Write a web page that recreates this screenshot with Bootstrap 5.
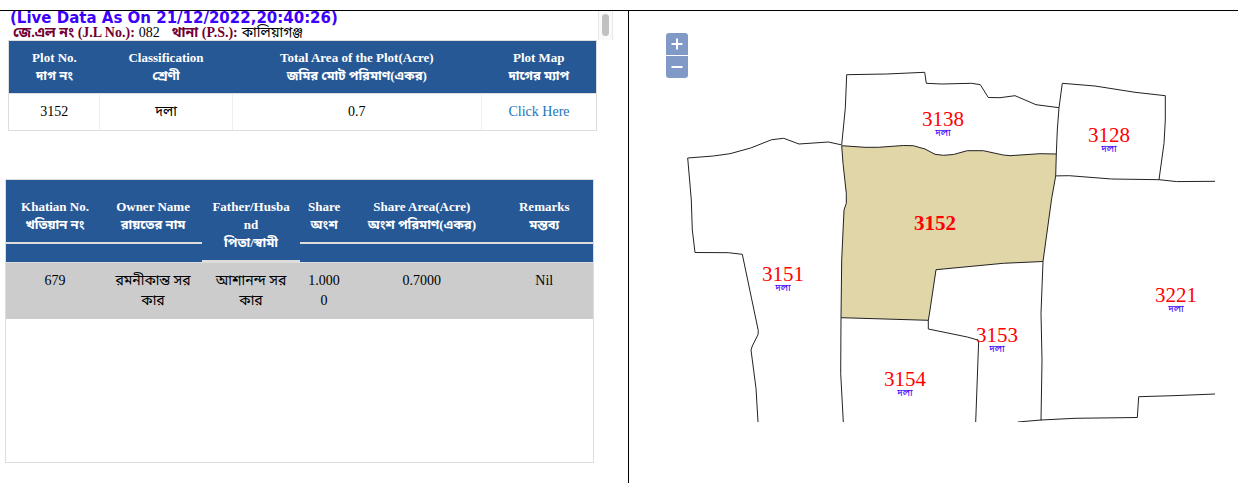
<!DOCTYPE html>
<html lang="bn">
<head>
<meta charset="utf-8">
<meta name="viewport" content="width=device-width, initial-scale=1">
<title>Plot Information</title>
<link href="https://cdn.jsdelivr.net/npm/bootstrap@5.3.0/dist/css/bootstrap.min.css" rel="stylesheet">
<style>
  body { font-family: "Liberation Serif", "Noto Sans Bengali", "Noto Sans", serif; font-size: 14px; line-height: 20px; color: #000; background: #fff; padding-top: 10px; }
  .split { display: grid; grid-template-columns: 629fr 609fr; border-top: 1px solid #000; }
  .info-pane { border-right: 1px solid #000; padding: 0 15px 20px 5px; }
  .live-time { font: bold 15px/14px "DejaVu Sans", sans-serif; color: #3c00ff; padding-left: 5px; white-space: nowrap; }
  .place { line-height: 15px; padding-left: 8px; white-space: nowrap; }
  .place dt { color: #700033; }
  .scroll-track { width: 15px; background: #fafafa; border: solid #e8e8e8; border-width: 0 1px; padding: 3px 3px 4px; }
  .scroll-thumb { width: 8px; background: #c1c1c1; }
  .tables { padding-right: 19px; }
  .grid-table { table-layout: fixed; width: 100%; text-align: center; }
  .grid-table th { color: #fff; font-size: 13px; line-height: 18px; background: #265896; vertical-align: top; }
  .plot-wrap { margin: 0 -3px 0 3px; border: 1px solid #ddd; }
  .plot-table th { padding: 8px 4px; }
  .plot-table td { padding: 8px 4px; border-top: 1px solid #ddd; border-left: 1px solid #eee; }
  .plot-table td:first-child { border-left: 0; }
  .plot-table a { color: #1b75bb; text-decoration: none; }
  .owner-wrap { min-height: 284px; margin-top: 48px; border: 1px solid #ddd; }
  .owner-table td { background: #ccc; padding: 8px; border-top: 1px solid #ddd; vertical-align: top; }
  .owner-table th { padding: 0; }
  .head-cell { padding: 18px 8px 8px; border-bottom: 2px solid #ddd; word-break: break-all; }
  .map-pane { padding-right: 23px; }
  .map-pane svg { display: block; width: 100%; height: auto; }
  .lines { fill: none; stroke: #222; stroke-width: 1; }
  .plot-no { font-size: 21px; fill: #f00; text-anchor: middle; }
  .plot-kind { font-size: 10px; fill: #3c00ff; text-anchor: middle; }
  .zoom-box { top: 22px; left: 37px; gap: 1px; }
  .zoom-box button { width: 22px; height: 22px; border: 0; padding: 0; background: #8099c7; }
  .zoom-box button:first-child { border-radius: 3px 3px 0 0; }
  .zoom-box button:last-child { border-radius: 0 0 3px 3px; }
  .zoom-box svg { width: 22px; height: 22px; }
</style>
</head>
<body>
<main class="split">
  <section class="info-pane">
    <div class="d-flex justify-content-between">
      <div>
        <div class="live-time">(Live Data As On 21/12/2022,20:40:26)</div>
        <dl class="place d-flex gap-1 mb-0">
          <dt>জে.এল নং (J.L No.):</dt><dd class="mb-0 me-2">082</dd>
          <dt>থানা (P.S.):</dt><dd class="mb-0">কালিয়াগঞ্জ</dd>
        </dl>
      </div>
      <div class="scroll-track d-flex"><div class="scroll-thumb rounded-pill"></div></div>
    </div>
    <div class="tables">
      <div class="plot-wrap">
        <table class="grid-table plot-table">
          <colgroup><col style="width:15.5%"><col style="width:22.5%"><col style="width:42.5%"><col style="width:19.5%"></colgroup>
          <thead><tr>
            <th>Plot No.<br>দাগ নং</th>
            <th>Classification<br>শ্রেণী</th>
            <th>Total Area of the Plot(Acre)<br>জমির মোট পরিমাণ(একর)</th>
            <th>Plot Map<br>দাগের ম্যাপ</th>
          </tr></thead>
          <tbody><tr><td>3152</td><td>দলা</td><td>0.7</td><td><a href="#map">Click Here</a></td></tr></tbody>
        </table>
      </div>
      <div class="owner-wrap">
        <table class="grid-table owner-table">
          <colgroup><col style="width:16.7%"><col style="width:16.7%"><col style="width:16.7%"><col style="width:8.2%"><col style="width:25.1%"><col style="width:16.6%"></colgroup>
          <thead><tr>
            <th><div class="head-cell">Khatian No.<br>খতিয়ান নং</div></th>
            <th><div class="head-cell">Owner Name<br>রায়তের নাম</div></th>
            <th><div class="head-cell">Father/Husba<wbr>nd<br>পিতা/স্বামী</div></th>
            <th><div class="head-cell px-0">Share<br>অংশ</div></th>
            <th><div class="head-cell">Share Area(Acre)<br>অংশ পরিমাণ(একর)</div></th>
            <th><div class="head-cell">Remarks<br>মন্তব্য</div></th>
          </tr></thead>
          <tbody><tr>
            <td>679</td>
            <td class="px-0">রমনীকান্ত সর<br>কার</td>
            <td class="px-0">আশানন্দ সর<br>কার</td>
            <td class="px-0">1.000<br>0</td>
            <td>0.7000</td>
            <td>Nil</td>
          </tr></tbody>
        </table>
      </div>
    </div>
  </section>
  <section class="map-pane position-relative" id="map">
    <svg viewBox="629 11 586 411" role="img" aria-label="Plot map">
      <path fill="#e0d6a8" stroke="#222" d="M841.7 145.7L865 147.3H878.3L903.3 145.5L913.3 145.7L925 149L935 154.3L943.3 155.3L953.3 154.5L967.3 150.7H983.3L1003.3 155L1010 155.7L1040 153.7L1056.3 154L1055.7 176L1051.7 198.3L1043 261.5L1003.3 263.3L936 269.7L930 310L928.3 320.3L841 317.7L841.7 260L844 210L846.3 203.3V193.3L843 163.3Z"/>
      <g class="lines">
        <path d="M841.7 144.7L845.3 108.3L846.7 74.7L886.7 74L924.7 72.3L926.3 83.3L941.7 84L971.7 83.3L980.3 84.7L988.3 97.5L1000 97.7L1015 95.7L1036 104.7L1059 107.7"/>
        <path d="M1056.3 154L1057.3 130L1059 107.7L1062.3 83.3L1095 86L1135 92.3L1165.3 95.7V120L1164 143.3L1159 179.7"/>
        <path d="M1055.7 175.9L1069.3 175.7L1111.7 179L1159 179.7L1176.7 181.6L1215 181.3"/>
        <path d="M841.7 144.9L828.3 142L799 144L783.7 138.3L771.7 139.7L750.7 148L730 153.7L713.3 156L687.7 158L691.3 200L692.3 230L695 252.5L728.3 252.7L742.3 254.3L758.3 330.7L758 334.7L752.3 346L751 350L756 388.3L758 422"/>
        <path d="M841 317.7L840.7 373.3L843.3 422"/>
        <path d="M928.3 320.3V329L967.3 337L978.7 340.3L975.7 422"/>
        <path d="M1043 261.5L1041 313.3L1042 360L1041 420.3"/>
        <path d="M1017.7 422L1041 420L1075 418.3L1137.3 417.5L1138.7 396.7L1173 395.7L1215 394"/>
      </g>
      <text class="plot-no" x="943" y="126">3138</text><text class="plot-kind" x="943" y="136">দলা</text>
      <text class="plot-no" x="1109" y="142">3128</text><text class="plot-kind" x="1109" y="152">দলা</text>
      <text class="plot-no" x="783" y="281">3151</text><text class="plot-kind" x="783" y="291">দলা</text>
      <text class="plot-no fw-bold" x="935" y="230">3152</text>
      <text class="plot-no" x="997" y="342">3153</text><text class="plot-kind" x="997" y="352">দলা</text>
      <text class="plot-no" x="905" y="386">3154</text><text class="plot-kind" x="905" y="396">দলা</text>
      <text class="plot-no" x="1176" y="302">3221</text><text class="plot-kind" x="1176" y="312">দলা</text>
    </svg>
    <div class="zoom-box position-absolute d-flex flex-column">
      <button type="button" aria-label="Zoom in" class="d-block"><svg viewBox="0 0 22 22"><path d="M11 5.500V16.500M5.500 11H16.500" stroke="#fff" stroke-width="2"/></svg></button>
      <button type="button" aria-label="Zoom out" class="d-block"><svg viewBox="0 0 22 22"><path d="M5.500 11H16.500" stroke="#fff" stroke-width="2"/></svg></button>
    </div>
  </section>
</main>
<script src="https://cdn.jsdelivr.net/npm/bootstrap@5.3.0/dist/js/bootstrap.bundle.min.js"></script>
</body>
</html>
